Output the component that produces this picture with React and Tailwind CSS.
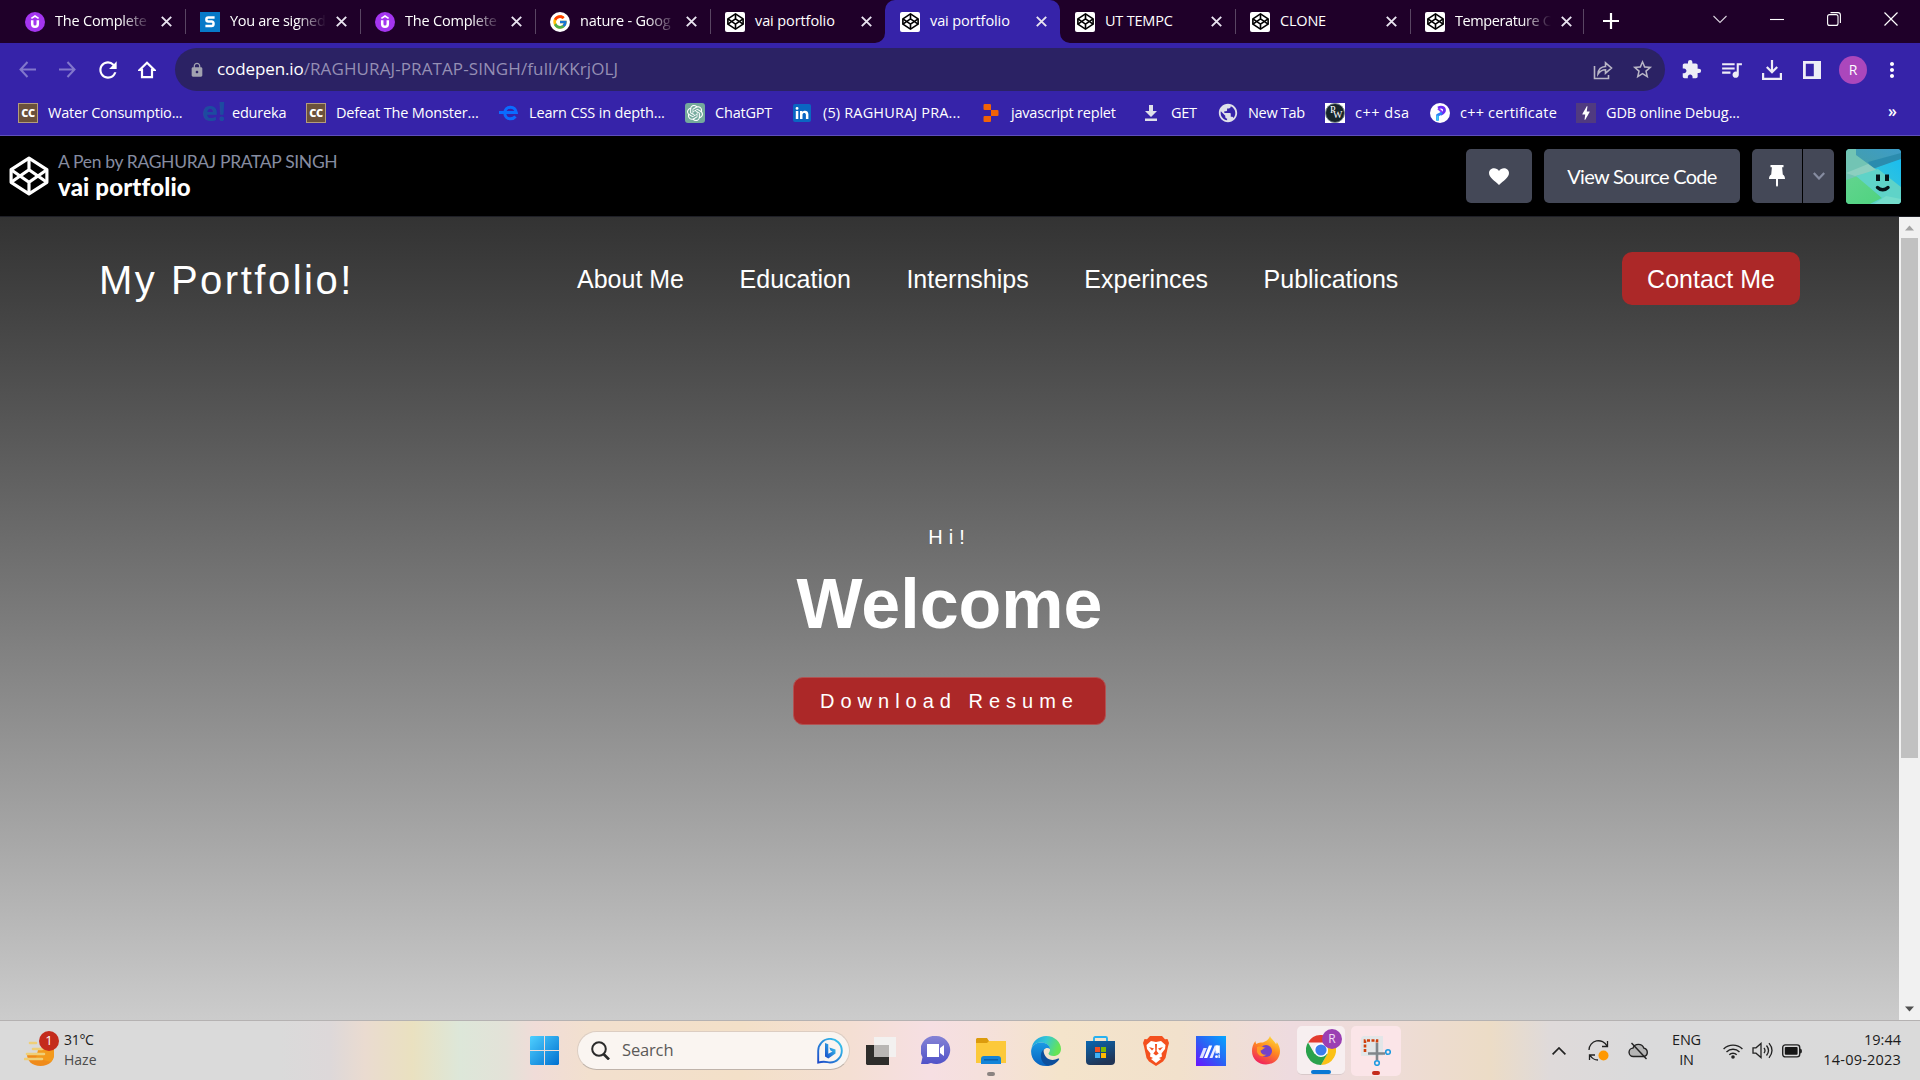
import React from "react";
import { FcGoogle } from "react-icons/fc";
import { MdExtension, MdQueueMusic, MdLock, MdStarOutline, MdRefresh, MdBolt, MdMoreVert, MdPublic } from "react-icons/md";
import { SiOpenai, SiReplit } from "react-icons/si";

function CodepenMark({ className, width = 2 }) {
  return (
    <svg viewBox="0 0 38 38" className={className} fill="none" stroke="currentColor" strokeWidth={width} strokeLinejoin="round">
      <path d="M19 2 36 13v12L19 36 2 25V13Z" />
      <path d="M2 13l17 12 17-12M2 25l17-12 17 12M19 2v11M19 25v11" />
    </svg>
  );
}

const Udemy = () => (
  <div className="size-5 rounded-full bg-[#a435f0] text-white">
    <svg viewBox="0 0 20 20" className="size-5" fill="none" stroke="currentColor">
      <path d="M6.4 6.400 10 4.100l3.600 2.300" strokeWidth="1.700" />
      <path d="M7.200 8.200v3.700a2.800 2.800 0 0 0 5.600 0V8.200" strokeWidth="2.500" />
    </svg>
  </div>
);

const PenIcon = () => (
  <div className="flex size-5 items-center justify-center rounded-[2px] bg-white text-black">
    <CodepenMark className="size-[17px]" width={3.600} />
  </div>
);

const SIcon = () => (
  <div className="flex size-5 items-center justify-center bg-[#0779c8]">
    <svg viewBox="0 0 20 20" className="size-5" fill="none" stroke="white" strokeWidth="2.5">
      <path d="M14.600 5.400H8.200c-2.400 0-2.400 4 0 4h3.400c2.600 0 2.600 4.600 0 4.600H5.400" />
    </svg>
  </div>
);

const tabs = [
  { title: "The Complete", icon: <Udemy />, fade: true, sep: true, track: "tracking-[-0.2px]" },
  { title: "You are signed", icon: <SIcon />, fade: true, sep: true, track: "tracking-[-0.3px]" },
  { title: "The Complete", icon: <Udemy />, fade: true, sep: true, track: "tracking-[-0.2px]" },
  { title: "nature - Goog", icon: <FcGoogle className="size-5 rounded-full bg-white p-[2px]" />, fade: true, sep: true, track: "tracking-[-0.2px]" },
  { title: "vai portfolio", icon: <PenIcon />, track: "tracking-[-0.1px]" },
  { title: "vai portfolio", icon: <PenIcon />, active: true, track: "tracking-[-0.1px]" },
  { title: "UT TEMPC", icon: <PenIcon />, sep: true, track: "tracking-[-0.2px]" },
  { title: "CLONE", icon: <PenIcon />, sep: true, track: "tracking-[-0.2px]" },
  { title: "Temperature C", icon: <PenIcon />, fade: true, sep: true, last: true, track: "tracking-[-0.4px]" },
];

function Tab({ title, icon, fade, sep, active, last, track }) {
  return (
    <div className={`relative flex h-[43px] items-center pl-[15px] ${last ? "w-[173px]" : "w-[175px]"} ${active ? "rounded-t-[10px] bg-[#3623a9]" : ""}`}>
      {active && (
        <>
          <svg viewBox="0 0 10 10" className="absolute bottom-0 -left-[10px] size-[10px]"><path d="M10 0v10H0A10 10 0 0 0 10 0Z" fill="#3623a9" /></svg>
          <svg viewBox="0 0 10 10" className="absolute -right-[10px] bottom-0 size-[10px]"><path d="M0 0v10h10A10 10 0 0 1 0 0Z" fill="#3623a9" /></svg>
        </>
      )}
      <div className="size-5 shrink-0">{icon}</div>
      <div className={`mb-[2px] ml-[10px] w-[98px] shrink-0 text-[14.5px] leading-5 whitespace-nowrap text-white ${track} ${fade ? "[mask-image:linear-gradient(to_right,black_68%,transparent_98%)]" : ""}`}>{title}</div>
      <svg viewBox="0 0 11 11" className="ml-[8px] size-[11px] shrink-0" stroke="#e9e4f0" strokeWidth="1.900"><path d="M.8.8l9.400 9.400M10.200.8.8 10.200" /></svg>
      {sep && <div className="absolute top-[9px] -right-px h-[25px] w-px bg-[#594562]" />}
    </div>
  );
}

const CC = () => (
  <div className="flex size-5 items-center justify-center border border-[#b49c7c] bg-[#6b513b] text-[11px] leading-none font-extrabold tracking-[-0.5px] text-white">CC</div>
);

const bookmarks = [
  { w: "w-[184px]", label: "Water Consumptio...", track: "tracking-[-0.2px]", icon: <CC /> },
  { w: "w-[104px]", label: "edureka", track: "tracking-[-0.2px]", icon: <span className="-mt-1 block text-[27px] leading-6 font-bold text-[#1d4ba0]">e!</span> },
  { w: "w-[193px]", label: "Defeat The Monster...", track: "tracking-[-0.15px]", icon: <CC /> },
  { w: "w-[186px]", label: "Learn CSS in depth...", track: "tracking-[-0.15px]", icon: (
    <svg viewBox="0 0 20 20" className="size-5" fill="none" stroke="#0a6cff" strokeWidth="3"><path d="M0 9.500h17.300c-.6-3.400-2.800-5.300-5.800-5.300-3.400 0-5.700 2.500-5.700 5.700 0 3.400 2.300 5.900 5.700 5.900 2.200 0 3.800-.8 5-2.300" /></svg>
  ) },
  { w: "w-[108px]", label: "ChatGPT", track: "tracking-[-0.2px]", icon: <div className="flex size-5 items-center justify-center rounded-[3px] bg-[#74aa9c]"><SiOpenai className="size-4 text-white" /></div> },
  { w: "w-[188px]", label: "(5) RAGHURAJ PRA...", track: "tracking-[0.15px]", icon: <div className="flex size-[18px] items-center justify-center rounded-[2px] bg-[#0a66c2]"><svg viewBox="0 0 18 18" className="size-[18px]" fill="white"><path d="M2.800 7h2.500v8H2.800zM2.600 4.400a1.450 1.450 0 1 0 2.900 0 1.450 1.450 0 0 0-2.900 0M7 7h2.400v1.100c1.300-2.100 6-2 6 2.100V15h-2.500v-4.200c0-2.500-3.400-2.300-3.400 0V15H7z" /></svg></div> },
  { w: "w-[160px]", label: "javascript replet", track: "tracking-[-0.2px]", icon: <SiReplit className="ml-[1px] size-[18px] text-[#f26207]" /> },
  { w: "w-[77px]", label: "GET", track: "tracking-[-0.3px]", icon: <svg viewBox="0 0 14 16" className="ml-[3px] h-4 w-[14px]" fill="#dfe0ea"><path d="M5 0h4v6h4l-6 6-6-6h4zM1 13.600h12V16H1z" /></svg> },
  { w: "w-[107px]", label: "New Tab", track: "tracking-[-0.3px]", icon: <MdPublic className="-ml-px size-[22px] text-[#dfe0ea]" /> },
  { w: "w-[105px]", label: "c++ dsa", track: "tracking-[0.5px]", icon: (
    <div className="size-5 bg-white">
      <div className="relative size-5 rounded-full border border-[#7c8a90] bg-[#16242a] font-['Liberation_Serif'] text-[10px] leading-none text-white">
        <span className="absolute top-[1px] left-[4px]">P</span>
        <span className="absolute top-[6px] left-[7px]">W</span>
      </div>
    </div>
  ) },
  { w: "w-[146px]", label: "c++ certificate", track: "tracking-[0.2px]", icon: (
    <div className="size-5 rounded-full bg-white">
      <svg viewBox="0 0 20 20" className="size-5" fill="none" strokeWidth="2.800" strokeLinejoin="round">
        <path d="M8 5c3-1.500 6.500-.8 6.500 2.200 0 2.300-2 3-4 4" stroke="#6a2cf5" />
        <path d="M8 5.500 12 9" stroke="#8a3af5" strokeWidth="2" />
        <path d="M12 10 7.500 12.300V17.500" stroke="#2a7ff5" />
        <path d="M7.500 12.500V18" stroke="#3fd0f5" strokeWidth="2" />
      </svg>
    </div>
  ) },
  { w: "w-[180px]", label: "GDB online Debug...", track: "tracking-[-0.1px]", icon: <div className="flex size-5 items-center justify-center bg-[#503a80]"><MdBolt className="size-[18px] text-white" /></div> },
];

function BrowserChrome() {
  return (
    <header className="font-['Open_Sans',sans-serif] text-white">
      <div className="flex h-[43px] bg-[#1f0029] pl-[10px]">
        {tabs.map((t, i) => <Tab key={i} {...t} />)}
        <svg viewBox="0 0 16 16" className="mt-[13px] ml-5 size-4" stroke="white" strokeWidth="2.200"><path d="M8 0v16M0 8h16" /></svg>
        <div className="mt-[12px] mr-[22px] ml-auto flex h-[14px] items-center gap-[43px]">
          <svg viewBox="0 0 14 14" className="size-[14px]" fill="none" stroke="#d8d0dc" strokeWidth="1.100"><path d="M.5 4 7 10.500 13.500 4" /></svg>
          <svg viewBox="0 0 14 14" className="size-[14px]" stroke="white" strokeWidth="1.100"><path d="M0 7.500h14" /></svg>
          <svg viewBox="0 0 14 14" className="size-[14px]" fill="none" stroke="white" strokeWidth="1.100"><rect x=".6" y="2.600" width="10.400" height="10.800" rx="2" /><path d="M3.500.6H11a2.400 2.400 0 0 1 2.400 2.400v8" /></svg>
          <svg viewBox="0 0 14 14" className="size-[14px]" stroke="white" strokeWidth="1.200"><path d="M.5.5l13 13M13.500.5l-13 13" /></svg>
        </div>
      </div>

      <div className="flex h-[53px] items-center bg-[#3623a9] pl-[19px]">
        <svg viewBox="0 0 17 17" className="size-[17px]" fill="none" stroke="#8277cc" strokeWidth="2"><path d="M17 8.500H1.500M8.500 1 1.500 8.500l7 7.500" /></svg>
        <svg viewBox="0 0 17 17" className="ml-[23px] size-[17px]" fill="none" stroke="#8277cc" strokeWidth="2"><path d="M0 8.500h15.500M8.500 1l7 7.500-7 7.500" /></svg>
        <MdRefresh className="ml-[19px] size-[26px]" />
        <svg viewBox="0 0 18 18" className="ml-[17px] size-[18px]" fill="none" stroke="white" strokeWidth="2.200"><path d="M9 1.800 1.800 8.800H4v7.400h10V8.800h2.200Z" /></svg>
        <div className="ml-[19px] flex h-[43px] w-[1490px] items-center rounded-full bg-[#2b2264] pr-[11px] pl-[14px]">
          <MdLock className="size-4 text-[#a2a2b0]" />
          <div className="ml-[12px] pb-px text-[17px] leading-6 whitespace-nowrap text-[#958fb4]"><span className="tracking-[-0.1px] text-white">codepen.io</span><span className="tracking-[0.1px]">/RAGHURAJ-PRATAP-SINGH/full/KKrjOLJ</span></div>
          <svg viewBox="0 0 20 20" className="ml-auto size-5" fill="none" stroke="#b9b6c6" strokeWidth="1.600"><path d="M1.500 6v12.500h14V15M5 14c.3-4.500 3-7.300 7.500-7.500V2.800L18.500 8l-6 5.200v-3.500C9 9.700 7 11 5 14Z" /></svg>
          <MdStarOutline className="ml-[18px] size-[23px] text-[#b9b6c6]" />
        </div>
        <MdExtension className="ml-4 size-[21px] text-[#eeedf6]" />
        <MdQueueMusic className="ml-[17px] size-[25px] text-[#eeedf6]" />
        <svg viewBox="0 0 20 20" className="ml-[18px] size-5" fill="none" stroke="#eeedf6" strokeWidth="2.200"><path d="M10 0v12M4.800 7 10 12.300 15.200 7M1.100 13v5.800h17.800V13" /></svg>
        <svg viewBox="0 0 18 18" className="ml-[21px] size-[18px]"><path fill="#eeedf6" fillRule="evenodd" d="M0 0h18v18H0zM2.800 2.800v12.400h8V2.800z" /></svg>
        <div className="ml-[18px] flex size-7 items-center justify-center rounded-full bg-[#ab47bc] text-[14px]">R</div>
        <MdMoreVert className="ml-[13px] size-6" />
      </div>

      <div className="flex h-[40px] items-center border-b border-[#5e4fbb] bg-[#3623a9] pb-[6px] pl-[18px]">
        {bookmarks.map((b, i) => (
          <div key={i} className={`flex shrink-0 items-center ${b.w}`}>
            <div className="w-[30px] shrink-0">{b.icon}</div>
            <span className={`text-[14.5px] leading-5 whitespace-nowrap ${b.track}`}>{b.label}</span>
          </div>
        ))}
        <span className="mr-[23px] ml-auto pb-1 text-[16px] leading-5 font-semibold">»</span>
      </div>
    </header>
  );
}

function PenHeader() {
  return (
    <div className="flex h-[81px] items-center border-b border-[#1e1f26] bg-black pl-[9px] font-[Lato,sans-serif] text-white">
      <CodepenMark className="size-10" width={3} />
      <div className="mt-[2px] ml-[9px] flex flex-col">
        <span className="text-[17.5px] leading-[22px] tracking-[-0.34px] text-[#868ca0]">A Pen by RAGHURAJ PRATAP SINGH</span>
        <span className="pb-[3px] text-[24px] leading-7 font-black tracking-[0.15px]">vai portfolio</span>
      </div>
      <div className="mr-[19px] ml-auto flex items-center">
        <div className="flex h-[54px] w-[66px] items-center justify-center rounded-[5px] bg-[#444857]">
          <svg viewBox="0 0 20 17" className="h-[17px] w-5" fill="white"><path d="M10 17C6 13 0 9.500 0 5 0-.5 7.500-1.500 10 3c2.500-4.500 10-3.500 10 2 0 4.500-6 8-10 12Z" /></svg>
        </div>
        <div className="ml-3 flex h-[54px] w-[196px] items-center justify-center rounded-[5px] bg-[#444857] text-[20px] tracking-[-0.7px]">View Source Code</div>
        <div className="ml-3 flex h-[54px] w-[50px] items-center justify-center rounded-l-[5px] bg-[#444857]">
          <svg viewBox="0 0 16 22" className="h-[22px] w-4" fill="white"><path d="M1.500 0h13v2.200h-1.400l.7 7.300c1.500 1 2.200 2.200 2.200 4.500H9v6.500L8 22l-1-1.500V14H0c0-2.300.7-3.500 2.200-4.500l.7-7.300H1.500z" /></svg>
        </div>
        <div className="ml-px flex h-[54px] w-[31px] items-center justify-center rounded-r-[5px] bg-[#444857]">
          <svg viewBox="0 0 12 8" className="h-2 w-3" fill="none" stroke="#868ca0" strokeWidth="2.200"><path d="M.8 1 6 6.500 11.200 1" /></svg>
        </div>
        <svg viewBox="0 0 55 55" className="ml-3 size-[55px] rounded-[4px]">
          <defs>
            <linearGradient id="av1" x1="1" y1="0" x2="0" y2="1"><stop offset="0" stopColor="#3d9cc8" /><stop offset="1" stopColor="#459fa6" /></linearGradient>
            <linearGradient id="av2" x1="1" y1="0" x2="0" y2="1"><stop offset="0" stopColor="#14baf5" /><stop offset="1" stopColor="#52cfc0" /></linearGradient>
            <linearGradient id="av3" x1="0" y1="0" x2="1" y2="1"><stop offset="0" stopColor="#62d48f" /><stop offset="1" stopColor="#4fd37f" /></linearGradient>
          </defs>
          <path d="M0 0h55v55H0z" fill="url(#av2)" />
          <path d="M10 0h45v9L22 22 10 12Z" fill="url(#av1)" />
          <path d="M22 13 55 4v6L26 20Z" fill="#2b8cae" />
          <path d="M0 0h10v6L32 22 0 31Z" fill="#72c4b4" />
          <path d="M0 24l22-9 10 7L9 27Z" fill="#8ccfc0" />
          <path d="M0 31l12-4 24 22-12 6H0Z" fill="url(#av3)" />
          <path d="M32 20l23 18v17H24l12-6L10 27Z" fill="#5fd3c8" />
          <path d="M28 55l12-8 15 3v5Z" fill="#74dccb" />
          <path d="M32 25.500v6.500M41 25.500v6.500" stroke="#061318" strokeWidth="4" />
          <path d="M31.500 38.500c3 3 7.500 3 10.500 0" fill="none" stroke="#061318" strokeWidth="3.400" strokeLinecap="round" />
        </svg>
      </div>
    </div>
  );
}

function Portfolio() {
  return (
    <main className="flex h-[803px] font-['Liberation_Sans',sans-serif] text-white">
      <div className="h-full w-[1899px] bg-linear-to-b from-[#333] to-[#ccc]">
        <nav className="flex h-[124px] items-center pr-[99px] pl-[99px]">
          <div className="w-[478px] pt-[2px] text-[40px] leading-none tracking-[2.5px]">My Portfolio!</div>
          <div className="flex gap-[55.6px] text-[25px] leading-8 whitespace-nowrap">
            <span>About Me</span><span>Education</span><span>Internships</span><span>Experinces</span><span>Publications</span>
          </div>
          <button className="mb-[2px] ml-auto h-[53px] w-[178px] rounded-[10px] bg-[#ac2828] pt-[3px] text-[25px] whitespace-nowrap">Contact Me</button>
        </nav>
        <section className="flex flex-col items-center pt-[184px]">
          <p className="text-[20px] leading-6 tracking-[6px]">Hi!</p>
          <h1 className="mt-[15px] text-[70px] leading-20 font-bold">Welcome</h1>
          <button className="mt-[33px] h-12 w-[313px] rounded-[10px] border border-[#b25252] bg-[#ac2828] text-[20px] tracking-[6px] whitespace-nowrap">Download Resume</button>
        </section>
      </div>
      <div className="flex flex-1 flex-col items-center bg-[#f1f1f1]">
        <svg viewBox="0 0 21 21" className="size-[21px]"><path d="M6 13.500h9L10.500 8.500Z" fill="#a3a3a3" /></svg>
        <div className="h-[520px] w-[17px] bg-[#c1c1c1]" />
        <svg viewBox="0 0 21 21" className="mt-auto size-[21px]"><path d="M6 7.500h9L10.500 12.500Z" fill="#505050" /></svg>
      </div>
    </main>
  );
}

function Taskbar() {
  return (
    <footer className="flex h-[60px] items-center border-t border-[#b5b2b2] bg-[linear-gradient(90deg,#dadada_0px,#dadada_280px,#ddd8d9_330px,#eadbd0_365px,#eae1c0_412px,#dde7d9_460px,#e3e2d8_505px,#f0dcd8_535px,#f2e0ce_590px,#f3e0c8_740px,#f4dfd3_850px,#f6dfe3_930px,#f5e0dc_980px,#f4e4cb_1060px,#f2e1cc_1180px,#eedbdf_1290px,#eedcd7_1390px,#ecdcc6_1490px,#dfdada_1550px,#dadadb_1640px,#dadada_1920px)] font-['Open_Sans',sans-serif] text-[#1c1c1c]">
      <div className="flex w-[530px] items-center pl-6">
        <div className="relative h-[30px] w-[40px]">
          <svg viewBox="0 0 32 26" className="mt-[5px] h-[26px] w-8"><path d="M3 13h27c0 7-5 12-13.500 12S3 20 3 13Z" fill="#ef8b1b" /><path d="M14 9l16-2v6c0 5-2 7-3 8L12 17Z" fill="#f39a1c" /><path d="M6 2h6M9 8h9M3 13h17M1 18h17" stroke="#efcf78" strokeWidth="2.600" strokeLinecap="round" /></svg>
          <div className="absolute -top-[5px] left-[15px] flex size-5 items-center justify-center rounded-full bg-[#c42b1c] text-[13px] text-white">1</div>
        </div>
        <div className="mb-[2px] flex flex-col text-[14px] leading-5"><span className="tracking-[-0.3px]">31°C</span><span className="text-[#4c4c4c]">Haze</span></div>
      </div>

      <svg viewBox="0 0 29 29" className="size-[29px] shrink-0">
        <defs><linearGradient id="win" x1="0" y1="0" x2="1" y2="1"><stop offset="0" stopColor="#4fd0ff" /><stop offset="1" stopColor="#0070d0" /></linearGradient></defs>
        <path fill="url(#win)" d="M1 0h13v14H0V1zM15 0h13l1 1v13H15zM0 15h14v14H1l-1-1zM15 15h14v13l-1 1H15z" />
      </svg>

      <div className="ml-[18px] flex h-[39px] w-[273px] shrink-0 items-center rounded-full border border-[#dccdc2] border-b-[#bfb3aa] bg-[#faf5f1] pr-[6px] pl-[13px]">
        <svg viewBox="0 0 19 19" className="size-[19px]" fill="none" stroke="#2a2a2a" strokeWidth="2"><circle cx="8" cy="8" r="6.800" /><path d="M12.500 13 18 18.500" strokeWidth="2.600" /></svg>
        <span className="ml-[12px] text-[16.500px] tracking-[-0.15px] text-[#5c5a58]">Search</span>
        <svg viewBox="0 0 26 26" className="ml-auto size-[26px]" fill="none">
          <defs><linearGradient id="bi" x1="1" y1="0" x2="0" y2="1"><stop offset="0" stopColor="#3ad0f0" /><stop offset="1" stopColor="#1b49c8" /></linearGradient></defs>
          <path d="M1.200 24.600V13a11.800 11.800 0 1 1 11.800 11.500c-3 0-5-1.800-11.800.1Z" stroke="url(#bi)" strokeWidth="1.900" />
          <path d="M8 5l3.300 1.300v9.500l4.200-2.300-2-1L12.400 9.400l6.100 2.200v4l-7.200 4.900L8 18.500Z" fill="url(#bi)" />
        </svg>
      </div>

      <svg viewBox="0 0 30 28" className="ml-4 h-7 w-[30px] shrink-0"><path d="M0 8h23v20H1l-1-1Z" fill="#2e2d2b" /><path d="M8 0h22v20H8Z" fill="#f3f1f0" /><path d="M8 8h15v12H8Z" fill="#b9b6b4" /></svg>
      <svg viewBox="0 0 30 29" className="ml-[25px] h-[29px] w-[30px] shrink-0">
        <defs><linearGradient id="ch" x1="0" y1="0" x2="0" y2="1"><stop offset="0" stopColor="#8583d5" /><stop offset="1" stopColor="#5052c8" /></linearGradient></defs>
        <path d="M15 0a14 14 0 1 1-5 27c-4 1.500-6 1-10 1l1.500-7A14 14 0 0 1 15 0Z" fill="url(#ch)" /><path d="M6 8h12v13H6zM19 12l4-3v11l-4-3z" fill="white" />
      </svg>
      <div className="relative ml-[25px] flex h-[58px] w-[30px] shrink-0 items-center">
        <svg viewBox="0 0 30 27" className="h-[27px] w-[30px]"><path d="M0 2l1-1h10l2 3h16l1 1v8H0Z" fill="#dc9b0c" /><path d="M13 4h17v22H0V6h11Z" fill="#fcc93a" /><path d="M5 27v-5q0-3 3-3h14q3 0 3 3v5Z" fill="#1384d8" /><path d="M8 22.800h14" stroke="#0b5ea8" strokeWidth="1.400" /></svg>
        <div className="absolute bottom-[4px] left-[11px] h-1 w-2 rounded-full bg-[#8b8381]" />
      </div>
      <svg viewBox="0 0 30 30" className="ml-[25px] size-[30px] shrink-0">
        <defs>
          <linearGradient id="e1" x1="0" y1="0" x2="1" y2=".3"><stop offset="0" stopColor="#1b9be2" /><stop offset=".5" stopColor="#34c7d6" /><stop offset="1" stopColor="#66e455" /></linearGradient>
          <linearGradient id="e2" x1="0" y1="0" x2="0" y2="1"><stop offset="0" stopColor="#1a9ae4" /><stop offset="1" stopColor="#0763c0" /></linearGradient>
        </defs>
        <path d="M.4 13C1.500 5 8 0 15.200 0 24 0 30 6.500 30 13c0 4.500-3.500 7-7.500 7-3 0-5-1-5-2.400 0-1 1.500-1.500 1.500-4.100C19 9 14 6.500 10 6.500 5 6.500 1.500 9.500.4 13Z" fill="url(#e1)" />
        <path d="M.2 14C1 9.500 5 6.500 10 6.500c4.500 0 9 2.500 9 6.500-4-3.500-10 2-6.500 9C15 27 20 29 18 29.700 7 31.500-.8 23.500.2 14Z" fill="url(#e2)" />
        <path d="M12.500 13.500C7.500 18 10 29 18 29.700c4-.3 8-3 10-6.300.5-.8-.2-1.200-.9-.8-6.600 3.400-14.600.4-14.600-9.100Z" fill="#0c4f9c" />
      </svg>
      <svg viewBox="0 0 29 29" className="ml-[25px] size-[29px] shrink-0">
        <defs><linearGradient id="st" x1="0" y1="0" x2=".4" y2="1"><stop offset="0" stopColor="#0a66b0" /><stop offset="1" stopColor="#203556" /></linearGradient></defs>
        <path d="M8 6V2.200Q8 1 9.200 1h10.600Q21 1 21 2.200V6" fill="none" stroke="#27b1f0" strokeWidth="1.900" /><path d="M0 5h29v20q0 4-4 4H4q-4 0-4-4Z" fill="url(#st)" /><path d="M9 11h5v5H9z" fill="#f25022" /><path d="M15 11h5v5h-5z" fill="#7fba00" /><path d="M9 17h5v5H9z" fill="#3fb0f5" /><path d="M15 17h5v5h-5z" fill="#ffb900" />
      </svg>
      <svg viewBox="0 0 26 30" className="ml-7 h-[30px] w-[26px] shrink-0">
        <path d="M7 0h12l3 3.200 2.500-.2L26 7l-1 3.500L22.500 22 20 25.500 13 30 6 25.500 3.500 22 1 10.500 0 7 1.500 3 4 3.200Z" fill="#f4501e" />
        <path d="M8 5l5 1 5-1 4.500 4-.5 4-3.500 4.500.5 3-3 1.500 2 1-5 4-5-4 2-1-3-1.500.5-3L4 13l-.5-4Z" fill="#fff" />
        <path d="M6 11l5 1.500-2 2zM20 11l-5 1.500 2 2zM12 8h2l-.3 7 2 2.500L13 19.500l-2.700-2 2-2.500Z" fill="#f4501e" />
      </svg>
      <svg viewBox="0 0 30 30" className="ml-[27px] size-[30px] shrink-0">
        <defs><linearGradient id="ma" x1="0" y1="1" x2="1" y2="0"><stop offset="0" stopColor="#6a12ff" /><stop offset=".5" stopColor="#2a62f4" /><stop offset="1" stopColor="#05a6ff" /></linearGradient></defs>
        <path d="M0 0h30v30H0z" fill="url(#ma)" />
        <path d="M3.500 22 7.500 12h3.300L6.800 22z" fill="#dfe2ff" />
        <path d="M8 22 13 9.500h3.200L11.200 22z" fill="#fff" />
        <path d="M13.500 22 18.800 9.500H22v8h-2.600V14L16.500 22z" fill="#e8ebff" />
        <path d="M20 9.500h3.800V18L20 15z" fill="#fff" />
        <circle cx="20.500" cy="20.700" r="1.400" fill="white" /><path d="M22.500 18.500h1.300v3.500h-1.300z" fill="#fff" />
      </svg>
      <svg viewBox="0 0 28 29" className="ml-[26px] h-[29px] w-7 shrink-0">
        <defs><linearGradient id="ff" x1=".8" y1="0" x2=".3" y2="1"><stop offset="0" stopColor="#ffe13a" /><stop offset=".45" stopColor="#ff8a1f" /><stop offset="1" stopColor="#f01e5f" /></linearGradient></defs>
        <path d="M18 0c1 3 4 4.500 6 8 1-.5.5-1.500.8-2 2 3 3.200 6 3.200 9 0 8-6 13.500-14 13.500S0 23 0 15c0-4 1-7 3.500-10 0 1.500.5 2.500 1 3 1.500-1.500 4-1.500 6-1.500C13 5.500 16 5 18 0Z" fill="url(#ff)" />
        <circle cx="14" cy="15" r="6" fill="#7442c8" /><path d="M5 11c4-1 6 0 9 1-3 0-3 2-5.500 2.500 0 3 3 5 6 4-3 3-8 2-9.500-2.500Z" fill="#ff9a25" />
      </svg>
      <div className="relative ml-[17px] flex h-[49px] w-12 shrink-0 items-center justify-center rounded-[5px] border-b border-[#d8c9ca] bg-[#f7eff0]">
        <svg viewBox="0 0 30 30" className="mr-px size-[30px]"><path d="M2 7.500A15 15 0 0 1 28 7.500H15Z" fill="#e33b2e" /><path d="M28 7.500A15 15 0 0 1 15 30l6.500-11.500V7.500Z" fill="#fbc116" /><path d="M15 30A15 15 0 0 1 2 7.500l6.500 11.300L21.500 18.700Z" fill="#2aa24c" /><circle cx="15" cy="15" r="7" fill="#fff" /><circle cx="15" cy="15" r="5.600" fill="#3b7ded" /></svg>
        <div className="absolute top-[3px] right-[3px] flex size-5 items-center justify-center rounded-full bg-[#9b3fb3] text-[12px] text-[#f0dcf4]">R</div>
        <div className="absolute bottom-0 left-[14px] h-1 w-5 rounded-full bg-[#0a78d4]" />
      </div>
      <div className="relative ml-[6px] flex h-[50px] w-[50px] shrink-0 items-center justify-center rounded-[5px] bg-[#fbe5e8]">
        <svg viewBox="0 0 30 30" className="size-[30px]"><path d="M2 0h20v20H0V2Z" fill="#e3e6e8" /><path d="M4 16V4.500h12V8" fill="none" stroke="#d0400c" strokeWidth="2.600" strokeDasharray="3 1.500" /><path d="M16 7v17M7 17.500h17" stroke="#80868b" strokeWidth="2.600" /><circle cx="16" cy="27" r="2.300" fill="none" stroke="#1d9ae0" strokeWidth="1.600" /><circle cx="27" cy="16" r="2.300" fill="none" stroke="#1d9ae0" strokeWidth="1.600" /></svg>
        <div className="absolute bottom-px left-[21px] h-1 w-2 rounded-full bg-[#c42b1c]" />
      </div>

      <div className="mr-[19px] ml-auto flex items-center">
        <svg viewBox="0 0 14 8" className="h-2 w-[14px]" fill="none" stroke="#222" strokeWidth="1.700"><path d="M.6 7.300 7 1l6.400 6.300" /></svg>
        <svg viewBox="0 0 21 21" className="ml-[22px] size-[21px]" fill="none" stroke="#222" strokeWidth="1.300"><path d="M1 10A9.500 9.500 0 0 1 19 6M19.500 1v5.500H14M10 20c-3 0-6-1.500-7.800-4.500M1.500 20v-5H7" /><circle cx="15.500" cy="15.500" r="5" fill="#ff9800" stroke="none" /></svg>
        <svg viewBox="0 0 21 18" className="ml-[19px] h-[18px] w-[21px]" fill="none" stroke="#222" strokeWidth="1.400"><path d="M5.500 14.500a4.200 4.200 0 0 1-.5-8.400 5.800 5.800 0 0 1 10.800 0 4.300 4.300 0 0 1 .2 8.400Z" fill="#b5b5b5" /><path d="M3.500 1l15 16" /></svg>
        <div className="mb-px ml-[23px] flex w-[29px] flex-col items-center text-[14.500px] leading-5 tracking-[-0.2px]"><span>ENG</span><span>IN</span></div>
        <svg viewBox="0 0 20 16" className="ml-[22px] h-4 w-5" fill="none" stroke="#222" strokeWidth="1.400"><path d="M.6 6a13.300 13.300 0 0 1 18.800 0M3.500 9a9.200 9.200 0 0 1 13 0M6.300 11.800a5.200 5.200 0 0 1 7.400 0" /><circle cx="10" cy="14" r="1.800" fill="#222" stroke="none" /></svg>
        <svg viewBox="0 0 21 17" className="ml-[9px] h-[17px] w-[21px]" fill="none" stroke="#222" strokeWidth="1.300"><path d="M1 5.800h3L9 1.500v14L4 11.200H1ZM12 5.800q2 2.700 0 5.400M14.500 3.500q4 5 0 10M17 1.200q6 7.300 0 14.600" /></svg>
        <svg viewBox="0 0 20 14" className="ml-[9px] h-[14px] w-5"><rect x=".7" y=".9" width="17" height="12" rx="2.600" fill="none" stroke="#222" strokeWidth="1.400" /><rect x="2.800" y="3" width="12.800" height="7.800" rx="1" fill="#161616" /><path d="M18 4.500q2 0 2 2.500t-2 2.500z" fill="#222" /></svg>
        <div className="mb-[2px] flex w-[99px] flex-col items-end text-[14.500px] leading-5 whitespace-nowrap"><span>19:44</span><span className="tracking-[0.2px]">14-09-2023</span></div>
      </div>
    </footer>
  );
}

export default function App() {
  return (
    <div className="flex h-[1080px] w-[1920px] flex-col overflow-hidden bg-black">
      <BrowserChrome />
      <PenHeader />
      <Portfolio />
      <Taskbar />
    </div>
  );
}
